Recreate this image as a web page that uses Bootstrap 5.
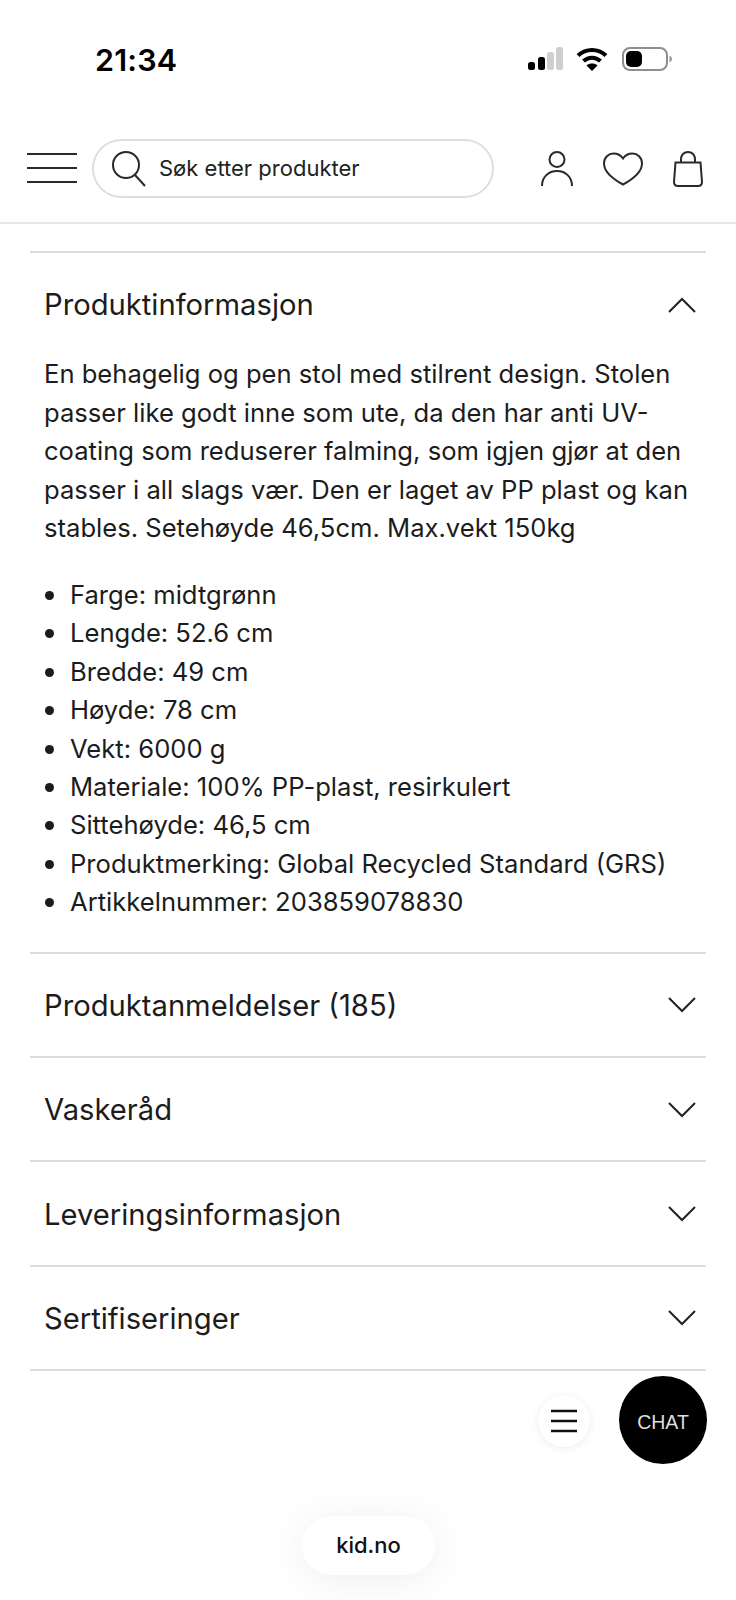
<!DOCTYPE html>
<html lang="en">
<head>
  <meta charset="UTF-8" />
  <title>kid.no</title>
  <link href="https://cdn.jsdelivr.net/npm/bootstrap@5.3.0/dist/css/bootstrap.min.css" rel="stylesheet" />
  <style>
    body { font-family: Inter, "Liberation Sans", sans-serif; color: #1c1c1c; background: #fff; width: 736px; height: 1600px; overflow: hidden; position: relative; }
    .status-row { height: 117px; padding: 41px 64px 0 95px; align-items: flex-start; }
    .clock { font-size: 30.5px; font-weight: 600; line-height: 38px; color: #000; letter-spacing: .2px; }
    .status-icons { margin-top: 6px; }
    .status-icons .signal-ico { margin-right: 13px; }
    .status-icons .wifi-ico { margin-right: 14px; }
    .head-row { height: 107px; padding: 22px 0 0 27px; border-bottom: 2px solid #e6e6e6; }
    .burger-top { width: 50px; margin-right: 15px; margin-top: 10px; }
    .search-box { width: 402px; height: 59px; border: 2px solid #dedede; border-radius: 30px; padding-left: 16px; font-size: 22px; color: #222; }
    .search-box svg { margin-right: 11px; }
    .head-icons { margin-left: 47px; gap: 30px; height: 59px; }
    .main-col { padding: 0 30px 0 30px; margin-top: 27px; }
    .info-acc { --bs-accordion-border-width: 0; --bs-accordion-border-radius: 0; --bs-accordion-inner-border-radius: 0; --bs-accordion-bg: transparent; --bs-accordion-active-bg: transparent; --bs-accordion-color: #1c1c1c; --bs-accordion-active-color: #1c1c1c; border-top: 2px solid #dcdcdc; }
    .info-acc .accordion-item { border-bottom: 2px solid #dcdcdc; }
    .info-acc .accordion-button { height: 102.4px; padding: 2px 10px 0 14px; font-size: 29.2px; line-height: 36px; justify-content: space-between; box-shadow: none; background: transparent; color: #1c1c1c; }
    .info-acc .accordion-button::after { display: none; }
    .info-acc .accordion-button svg { margin-top: -1px; }
    .info-acc .accordion-body { padding: 0 14px 30px; font-size: 25.6px; line-height: 38.4px; }
    .info-acc p { margin-bottom: 28.5px; }
    .info-acc ul { list-style: none; padding-left: 26px; margin: 0; }
    .info-acc li { position: relative; }
    .info-acc li::before { content: ""; position: absolute; left: -25px; top: 15px; width: 9px; height: 9px; border-radius: 50%; background: #1c1c1c; }
    .float-btn { position: absolute; border-radius: 50%; }
    .menu-btn { left: 538px; top: 1395px; width: 52px; height: 52px; background: #fff; box-shadow: 0 1px 8px rgba(0,0,0,.08); }
    .chat-btn { left: 619px; top: 1376px; width: 88px; height: 88px; padding-top: 5px; background: #000; color: #dedede; font-size: 19.5px; font-family: "Liberation Sans", sans-serif; }
    .url-pill { position: absolute; left: 302px; top: 1516px; width: 133px; height: 59px; border-radius: 30px; background: #fff; font-size: 22px; font-weight: 500; color: #111; box-shadow: 0 4px 40px rgba(0,0,0,.07); }
  </style>
</head>
<body>

  <!-- Status bar -->
  <div class="status-row d-flex justify-content-between">
    <div class="clock">21:34</div>
    <div class="status-icons d-flex align-items-center">
      <svg class="signal-ico" width="36" height="24" viewBox="0 0 36 24"><rect x="1" y="15" width="7" height="8" rx="2.5" fill="#000"/><rect x="11" y="10" width="7" height="13" rx="2.5" fill="#000"/><rect x="20" y="5" width="7" height="18" rx="2.5" fill="#cfcfcf"/><rect x="29" y="0" width="7" height="23" rx="2.5" fill="#cfcfcf"/></svg>
      <svg class="wifi-ico" width="32" height="24" viewBox="0 0 32 24" fill="none" stroke="#000" stroke-width="4"><path d="M2 8.500C10 1 22 1 30 8.500"/><path d="M7.500 14C12.500 9.500 19.500 9.500 24.500 14"/><path d="M16 24l-5.500-5.500c3-2.600 8-2.600 11 0z" fill="#000" stroke="none"/></svg>
      <svg width="50" height="24" viewBox="0 0 50 24"><rect x="1" y="1" width="44" height="22" rx="7" fill="none" stroke="#8e8e8e" stroke-width="2"/><rect x="4" y="4" width="16" height="16" rx="5" fill="#000"/><path d="M47.500 8.500c1.600 .8 2.500 2 2.500 3.500s-.9 2.700-2.500 3.500z" fill="#9a9a9a"/></svg>
    </div>
  </div>

  <!-- Header -->
  <div class="head-row d-flex align-items-start">
    <svg class="burger-top" height="38" viewBox="0 0 50 38" stroke="#2a2a2a" stroke-width="2"><path d="M0 5h50M0 19h50M0 33h50"/></svg>
    <div class="search-box d-flex align-items-center">
      <svg width="38" height="38" viewBox="0 0 38 38" fill="none" stroke="#2a2a2a" stroke-width="2"><circle cx="16" cy="15" r="13"/><path d="M25 25l10 11"/></svg>
      <span>Søk etter produkter</span>
    </div>
    <div class="head-icons d-flex align-items-center">
      <svg width="32" height="36" viewBox="0 0 32 36" fill="none" stroke="#2a2a2a" stroke-width="2"><circle cx="16" cy="8.500" r="7.500"/><path d="M1 35c0-9 6.500-15 15-15s15 6 15 15"/></svg>
      <svg width="40" height="34" viewBox="0 0 40 34" fill="none" stroke="#2a2a2a" stroke-width="2"><path d="M20 32.500C9 26.500 1 20 1 11.500 1 5.500 5.500 1.500 10.500 1.500 14.500 1.500 18 3.500 20 6.500c2-3 5.500-5 9.500-5C34.500 1.500 39 5.500 39 11.500c0 8.500-8 15-19 21z"/></svg>
      <svg width="30" height="36" viewBox="0 0 30 36" fill="none" stroke="#2a2a2a" stroke-width="2"><path d="M8 11.500V8c0-4 3-7 7-7s7 3 7 7v3.500"/><path d="M2.500 11.500h25L29 31c0 2.500-1.500 4-4 4H5c-2.500 0-4-1.500-4-4z"/></svg>
    </div>
  </div>

  <!-- Product accordion -->
  <div class="main-col">
    <div class="accordion info-acc">
      <div class="accordion-item">
        <button class="accordion-button" type="button">
          <span>Produktinformasjon</span>
          <svg width="28" height="16" viewBox="0 0 28 16" fill="none" stroke="#222" stroke-width="2"><path d="M1 15L14 2l13 13"/></svg>
        </button>
        <div class="accordion-collapse collapse show">
          <div class="accordion-body">
            <p>En behagelig og pen stol med stilrent design. Stolen passer like godt inne som ute, da den har anti UV-coating som reduserer falming, som igjen gjør at den passer i all slags vær. Den er laget av PP plast og kan stables. Setehøyde 46,5cm. Max.vekt 150kg</p>
            <ul>
              <li>Farge: midtgrønn</li>
              <li>Lengde: 52.6 cm</li>
              <li>Bredde: 49 cm</li>
              <li>Høyde: 78 cm</li>
              <li>Vekt: 6000 g</li>
              <li>Materiale: 100% PP-plast, resirkulert</li>
              <li>Sittehøyde: 46,5 cm</li>
              <li>Produktmerking: Global Recycled Standard (GRS)</li>
              <li>Artikkelnummer: 203859078830</li>
            </ul>
          </div>
        </div>
      </div>
      <div class="accordion-item">
        <button class="accordion-button collapsed" type="button">
          <span>Produktanmeldelser (185)</span>
          <svg width="28" height="16" viewBox="0 0 28 16" fill="none" stroke="#222" stroke-width="2"><path d="M1 1l13 13L27 1"/></svg>
        </button>
      </div>
      <div class="accordion-item">
        <button class="accordion-button collapsed" type="button">
          <span>Vaskeråd</span>
          <svg width="28" height="16" viewBox="0 0 28 16" fill="none" stroke="#222" stroke-width="2"><path d="M1 1l13 13L27 1"/></svg>
        </button>
      </div>
      <div class="accordion-item">
        <button class="accordion-button collapsed" type="button">
          <span>Leveringsinformasjon</span>
          <svg width="28" height="16" viewBox="0 0 28 16" fill="none" stroke="#222" stroke-width="2"><path d="M1 1l13 13L27 1"/></svg>
        </button>
      </div>
      <div class="accordion-item">
        <button class="accordion-button collapsed" type="button">
          <span>Sertifiseringer</span>
          <svg width="28" height="16" viewBox="0 0 28 16" fill="none" stroke="#222" stroke-width="2"><path d="M1 1l13 13L27 1"/></svg>
        </button>
      </div>
    </div>
  </div>

  <!-- Floating buttons -->
  <div class="float-btn menu-btn d-flex align-items-center justify-content-center">
    <svg width="26" height="24" viewBox="0 0 26 24" stroke="#111" stroke-width="2.400"><path d="M0 2h26M0 12h26M0 22h26"/></svg>
  </div>
  <div class="float-btn chat-btn d-flex align-items-center justify-content-center">CHAT</div>
  <div class="url-pill d-flex align-items-center justify-content-center">kid.no</div>

  <script src="https://cdn.jsdelivr.net/npm/bootstrap@5.3.0/dist/js/bootstrap.bundle.min.js"></script>
</body>
</html>
